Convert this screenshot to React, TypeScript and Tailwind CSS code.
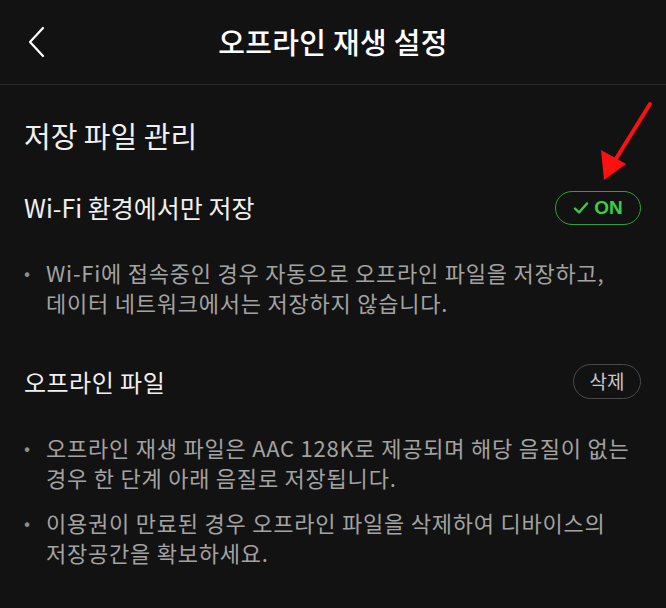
import React from 'react';

const font = { fontFamily: '"Noto Sans CJK KR", "Noto Sans", sans-serif' };

const Bullet: React.FC<{ children: React.ReactNode }> = ({ children }) => (
  <li className="flex text-[22px] leading-[29.5px] tracking-[0.035em] text-[#a3a3a3] whitespace-nowrap">
    <span className="shrink-0 w-[22px] text-[18px] text-[#8e8e8e]">•</span>
    <span>{children}</span>
  </li>
);

const App: React.FC = () => {
  return (
    <div className="relative w-[666px] h-[608px] bg-[#121212] text-white overflow-hidden" style={font}>
      {/* Header */}
      <header className="relative h-[85px] flex items-center justify-center border-b border-[#2a2a2a]">
        <button className="absolute left-[23px] top-[26px] w-[24px] h-[32px] flex items-center justify-center">
          <svg width="20" height="32" viewBox="0 0 20 32" fill="none">
            <path d="M18 2 L5 16 L18 30" stroke="white" strokeWidth="2.2" strokeLinecap="round" strokeLinejoin="round" />
          </svg>
        </button>
        <h1 className="text-[29px] font-medium tracking-[0.01em]">오프라인 재생 설정</h1>
      </header>

      <div className="px-6">
        <h2 className="pt-[30px] text-[29px] leading-[40px] text-[#f0f0f0]">저장 파일 관리</h2>

        <div className="mt-[36px] h-[34px] flex items-center justify-between">
          <span className="text-[25px] text-[#f0f0f0]">Wi-Fi 환경에서만 저장</span>
          <div className="mr-[1px] w-[86px] h-[34px] rounded-full border-[1.5px] border-[#2ba33a] flex items-center justify-center gap-[5px] text-[#37d043] font-bold text-[19px]">
            <svg width="16" height="14" viewBox="0 0 16 14" fill="none">
              <path d="M2 7.5 L6 11.5 L14 2.5" stroke="#37d043" strokeWidth="2.4" strokeLinecap="round" strokeLinejoin="round" />
            </svg>
            <span style={{ fontFamily: '"Liberation Sans", sans-serif' }}>ON</span>
          </div>
        </div>

        <ul className="mt-[33px]">
          <Bullet>
            Wi-Fi에 접속중인 경우 자동으로 오프라인 파일을 저장하고,
            <br />
            데이터 네트워크에서는 저장하지 않습니다.
          </Bullet>
        </ul>

        <div className="mt-[47px] h-[35px] flex items-center justify-between">
          <span className="text-[24px] tracking-[0.02em] text-[#f0f0f0]">오프라인 파일</span>
          <button className="mr-[1px] w-[68px] h-[35px] rounded-full border border-[#4a4a4a] text-[19px] text-[#c8c8c8]">
            삭제
          </button>
        </div>

        <ul className="mt-[34px] space-y-[16px]">
          <Bullet>
            오프라인 재생 파일은 AAC 128K로 제공되며 해당 음질이 없는
            <br />
            경우 한 단계 아래 음질로 저장됩니다.
          </Bullet>
          <Bullet>
            이용권이 만료된 경우 오프라인 파일을 삭제하여 디바이스의
            <br />
            저장공간을 확보하세요.
          </Bullet>
        </ul>
      </div>

      {/* Annotation arrow */}
      <svg className="absolute left-[590px] top-[98px]" width="70" height="90" viewBox="0 0 70 90">
        <line x1="60" y1="6" x2="24" y2="64" stroke="#ff1010" strokeWidth="4" strokeLinecap="round" />
        <polygon points="14,82 11,52 36,66" fill="#ff1010" />
      </svg>
    </div>
  );
};

export default App;
